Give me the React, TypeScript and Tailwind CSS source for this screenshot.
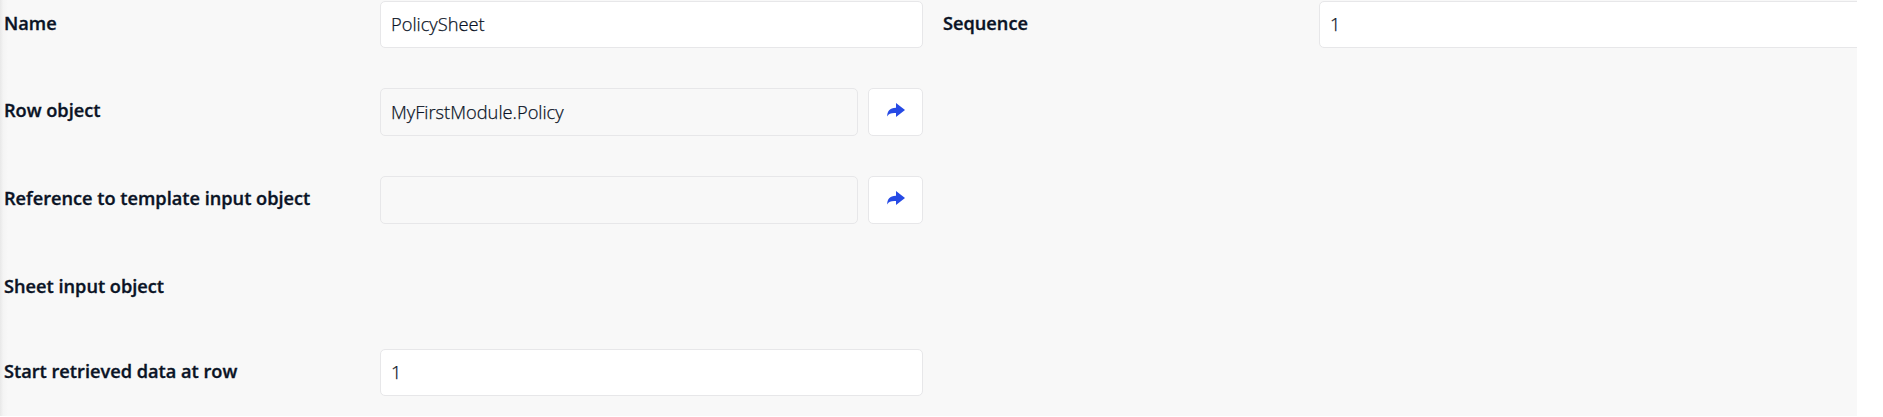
import type { ReactNode } from "react";

function Label({ children }: { children: ReactNode }) {
  return (
    <label className="w-[376px] shrink-0 pt-[9px] text-[18.2px] leading-[26px] font-semibold whitespace-nowrap text-[#0a1325] [-webkit-text-stroke:0.35px_#0a1325]">
      {children}
    </label>
  );
}

function Field({ value, readOnly = false }: { value: string; readOnly?: boolean }) {
  return (
    <div
      className={
        readOnly
          ? "flex h-12 w-[478px] items-center rounded-[5px] border border-[#e7e7e9] bg-[#f8f8f8] px-[10px] pb-px"
          : "flex h-[47px] min-w-0 flex-1 items-center rounded-[5px] border border-[#e7e7e9] bg-white px-[10px] pb-px"
      }
    >
      <span className="text-[18.3px] leading-[26px] font-light text-[#0a1325] [-webkit-text-stroke:0.25px_#0a1325]">{value}</span>
    </div>
  );
}

function OpenButton() {
  return (
    <button
      type="button"
      aria-label="Open"
      className="ml-[10px] flex h-12 w-[55px] items-center justify-center rounded-[5px] border border-[#e7e7e9] bg-white pb-1"
    >
      <svg width="18" height="14" viewBox="0 0 18 14" fill="#264ae5">
        <path d="M9 0 18 7 9 14V10C4.5 9.8 1.8 10.2.2 13.5.2 8.5 2.5 4.9 9 4.8Z" />
      </svg>
    </button>
  );
}

export default function App() {
  return (
    <main className="h-[417px] w-[1883px] overflow-hidden bg-white font-['Open_Sans','Noto_Sans',sans-serif]">
      <div className="flex h-[416px] w-[1857px] overflow-hidden bg-[#f8f8f8]">
        <div className="h-full w-2 shrink-0 bg-linear-to-r from-[#e8e8e8] via-[#f4f4f4] via-40% to-[#f8f8f8]" />
        <form className="-ml-1 w-[1860px] shrink-0 pt-px">
          <div className="flex h-[87px]">
            <div className="flex w-[919px] shrink-0">
              <Label>Name</Label>
              <Field value="PolicySheet" />
            </div>
            <div className="ml-5 flex w-[919px] shrink-0">
              <Label>Sequence</Label>
              <Field value="1" />
            </div>
          </div>
          <div className="flex h-[88px]">
            <Label>Row object</Label>
            <Field value="MyFirstModule.Policy" readOnly />
            <OpenButton />
          </div>
          <div className="flex h-[88px]">
            <Label>Reference to template input object</Label>
            <Field value="" readOnly />
            <OpenButton />
          </div>
          <div className="flex h-[85px]">
            <Label>Sheet input object</Label>
          </div>
          <div className="flex w-[919px]">
            <Label>Start retrieved data at row</Label>
            <Field value="1" />
          </div>
        </form>
      </div>
    </main>
  );
}
